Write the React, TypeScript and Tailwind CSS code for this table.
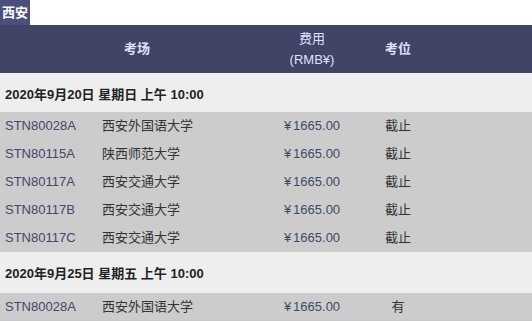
const sessions = [
  {
    date: "2020年9月20日 星期日 上午 10:00",
    rows: [
      { id: "STN80028A", venue: "西安外国语大学", price: "1665.00", seat: "截止" },
      { id: "STN80115A", venue: "陕西师范大学", price: "1665.00", seat: "截止" },
      { id: "STN80117A", venue: "西安交通大学", price: "1665.00", seat: "截止" },
      { id: "STN80117B", venue: "西安交通大学", price: "1665.00", seat: "截止" },
      { id: "STN80117C", venue: "西安交通大学", price: "1665.00", seat: "截止" },
    ],
  },
  {
    date: "2020年9月25日 星期五 上午 10:00",
    rows: [{ id: "STN80028A", venue: "西安外国语大学", price: "1665.00", seat: "有" }],
  },
];

const cols = "grid grid-cols-[102px_172px_76px_96px_1fr]";

export default function App() {
  return (
    <div
      className="w-[532px] h-[322px] bg-white overflow-hidden text-[13px]"
      style={{ fontFamily: '"Liberation Sans", Arial, "Noto Sans CJK SC", sans-serif' }}
    >
      <div className="flex">
        <div className="w-[30px] h-[25px] bg-[#4b4f7e] text-white font-bold text-[13px] leading-[25px] pl-[2px]">
          西安
        </div>
      </div>

      <div className={`${cols} h-[48px] bg-[#414465] text-[#dfe1ff] items-center`}>
        <div className="col-span-2 text-center font-bold">考场</div>
        <div className="text-center leading-[21px]">
          <div>费用</div>
          <div>(RMB¥)</div>
        </div>
        <div className="text-center font-bold">考位</div>
        <div />
      </div>

      {sessions.map((s, i) => (
        <div key={i}>
          <div
            className={`${i === 0 ? "h-[39px]" : "h-[41px]"} bg-[#eeeeee] pt-[14px] pl-[5px] font-bold text-[#222] leading-[16px]`}
          >
            {s.date}
          </div>
          {s.rows.map((r, j) => (
            <div key={j} className={`${cols} h-[28px] bg-[#cccccc] items-center`}>
              <div className="pl-[5px] text-[#46456a]">{r.id}</div>
              <div className="text-[#333]">{r.venue}</div>
              <div className="text-center text-[#3c4a68]">
                <span className="mr-[2px]">¥</span>
                {r.price}
              </div>
              <div className="text-center text-[#333]">{r.seat}</div>
              <div />
            </div>
          ))}
        </div>
      ))}
    </div>
  );
}
